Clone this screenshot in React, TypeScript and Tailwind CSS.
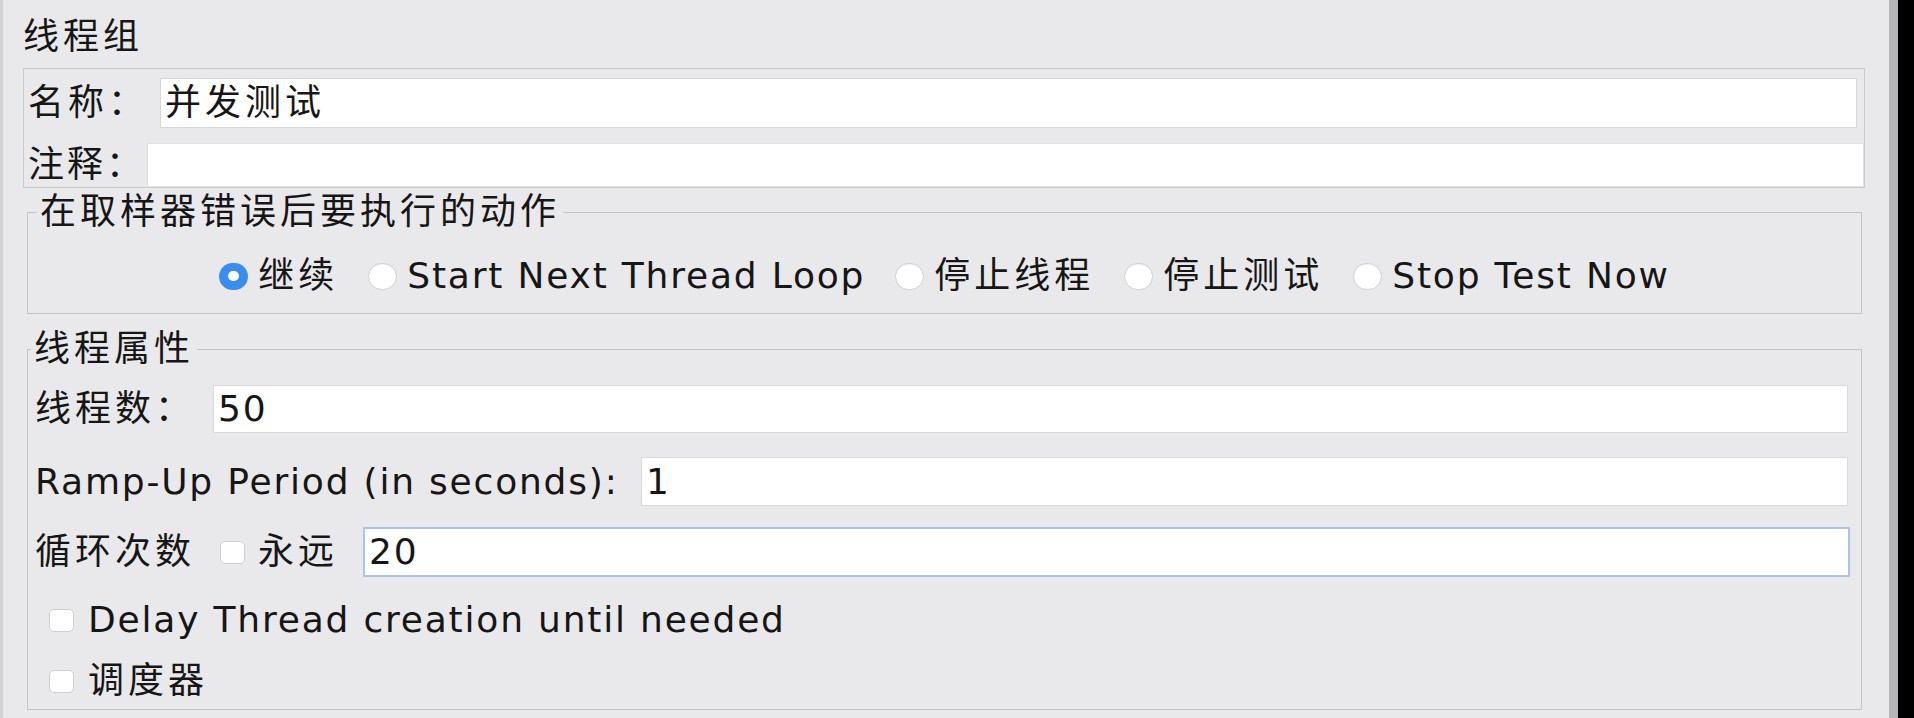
import React from 'react';

const zh = 'tracking-[4px]';
const en = 'tracking-[1.8px]';

function Radio({ checked }: { checked?: boolean }) {
  if (checked) {
    return (
      <span className="flex h-[27px] w-[29px] items-center justify-center rounded-full bg-[#3a8df0]">
        <span className="h-[10px] w-[11px] rounded-full bg-white" />
      </span>
    );
  }
  return (
    <span className="h-[27px] w-[29px] rounded-full border border-[#cfcfcf] bg-white shadow-[inset_0_1px_1px_rgba(0,0,0,0.06)]" />
  );
}

function Checkbox() {
  return (
    <span className="h-[23px] w-[25px] shrink-0 rounded-[5px] border border-[#cfcfcf] bg-white" />
  );
}

function Field({
  value,
  className,
}: {
  value?: string;
  className: string;
}) {
  return (
    <input
      readOnly
      defaultValue={value ?? ''}
      className={`min-w-0 flex-1 bg-white pl-[4px] text-[36px] text-[#161616] outline-none ${className}`}
    />
  );
}

const options = [
  { label: '继续', checked: true, cls: zh },
  { label: 'Start Next Thread Loop', cls: en },
  { label: '停止线程', cls: zh },
  { label: '停止测试', cls: zh },
  { label: 'Stop Test Now', cls: en },
];

export default function App() {
  return (
    <div className="flex h-[718px] w-[1914px] overflow-hidden font-['DejaVu_Sans','Noto_Sans_CJK_SC',sans-serif] text-[36px] text-[#161616]">
      <div className="flex min-w-0 flex-1 flex-col border-l-[3px] border-[#d3d3d5] bg-[#e9e9eb] pl-[20px] pr-[24px] pt-[17px]">
        {/* title */}
        <div className={`flex h-[40px] items-center leading-none ${zh}`}>线程组</div>

        {/* name / comment */}
        <div className="mt-[11px] flex flex-col border border-[#cbcbcd] pt-[9px]">
          <div className="flex h-[50px] items-stretch pr-[7px]">
            <div className={`flex w-[136px] shrink-0 items-center whitespace-nowrap pl-[4px] leading-none ${zh}`}>名称：</div>
            <Field value="并发测试" className={`border border-[#d6d6d6] ${zh}`} />
          </div>
          <div className="mt-[15px] flex h-[44px] items-stretch">
            <div className="flex w-[123px] shrink-0 items-center whitespace-nowrap pl-[4px] leading-none tracking-[3px]">注释：</div>
            <Field className="border border-[#e0e0e0]" />
          </div>
        </div>

        {/* action after sampler error */}
        <fieldset className="ml-[4px] mr-[3px] mt-[4px] border border-[#c4c4c6] pb-[17px]">
          <legend className={`ml-[9px] h-[40px] px-[3px] leading-[40px] ${zh}`}>在取样器错误后要执行的动作</legend>
          <div className="mt-[24px] flex h-[40px] items-center justify-center gap-[30px]">
            {options.map((o) => (
              <div key={o.label} className="flex items-center gap-[10px]">
                <Radio checked={o.checked} />
                <span className={`leading-none ${o.cls}`}>{o.label}</span>
              </div>
            ))}
          </div>
        </fieldset>

        {/* thread properties */}
        <fieldset className="ml-[4px] mr-[3px] mt-[15px] border border-[#c4c4c6] pb-[8px] pl-[7px] pr-[13px]">
          <legend className={`-ml-[4px] h-[40px] px-[3px] leading-[40px] ${zh}`}>线程属性</legend>

          <div className="mt-[16px] flex h-[48px] items-stretch">
            <div className={`flex w-[178px] shrink-0 items-center leading-none ${zh}`}>线程数：</div>
            <Field value="50" className={`border border-[#dadada] ${en}`} />
          </div>

          <div className="mt-[24px] flex h-[49px] items-stretch">
            <div className={`flex w-[606px] shrink-0 items-center whitespace-nowrap leading-none ${en}`}>
              Ramp-Up Period (in seconds):
            </div>
            <Field value="1" className={`border border-[#dadada] ${en}`} />
          </div>

          <div className="mt-[21px] flex h-[50px] items-stretch">
            <div className="flex w-[328px] shrink-0 items-center">
              <span className={`w-[185px] leading-none ${zh}`}>循环次数</span>
              <Checkbox />
              <span className={`ml-[13px] leading-none ${zh}`}>永远</span>
            </div>
            <Field value="20" className={`-mr-[2px] border-2 border-[#adc5e4] ${en}`} />
          </div>

          <div className="mt-[23px] flex h-[40px] items-center gap-[14px] pl-[14px]">
            <Checkbox />
            <span className={`leading-none ${en}`}>Delay Thread creation until needed</span>
          </div>

          <div className="mt-[21px] flex h-[40px] items-center gap-[14px] pl-[14px]">
            <Checkbox />
            <span className={`leading-none ${zh}`}>调度器</span>
          </div>
        </fieldset>
      </div>

      {/* window edge */}
      <div className="w-[9px] shrink-0 bg-[#b6b6b8]" />
      <div className="w-[16px] shrink-0 bg-black" />
    </div>
  );
}
